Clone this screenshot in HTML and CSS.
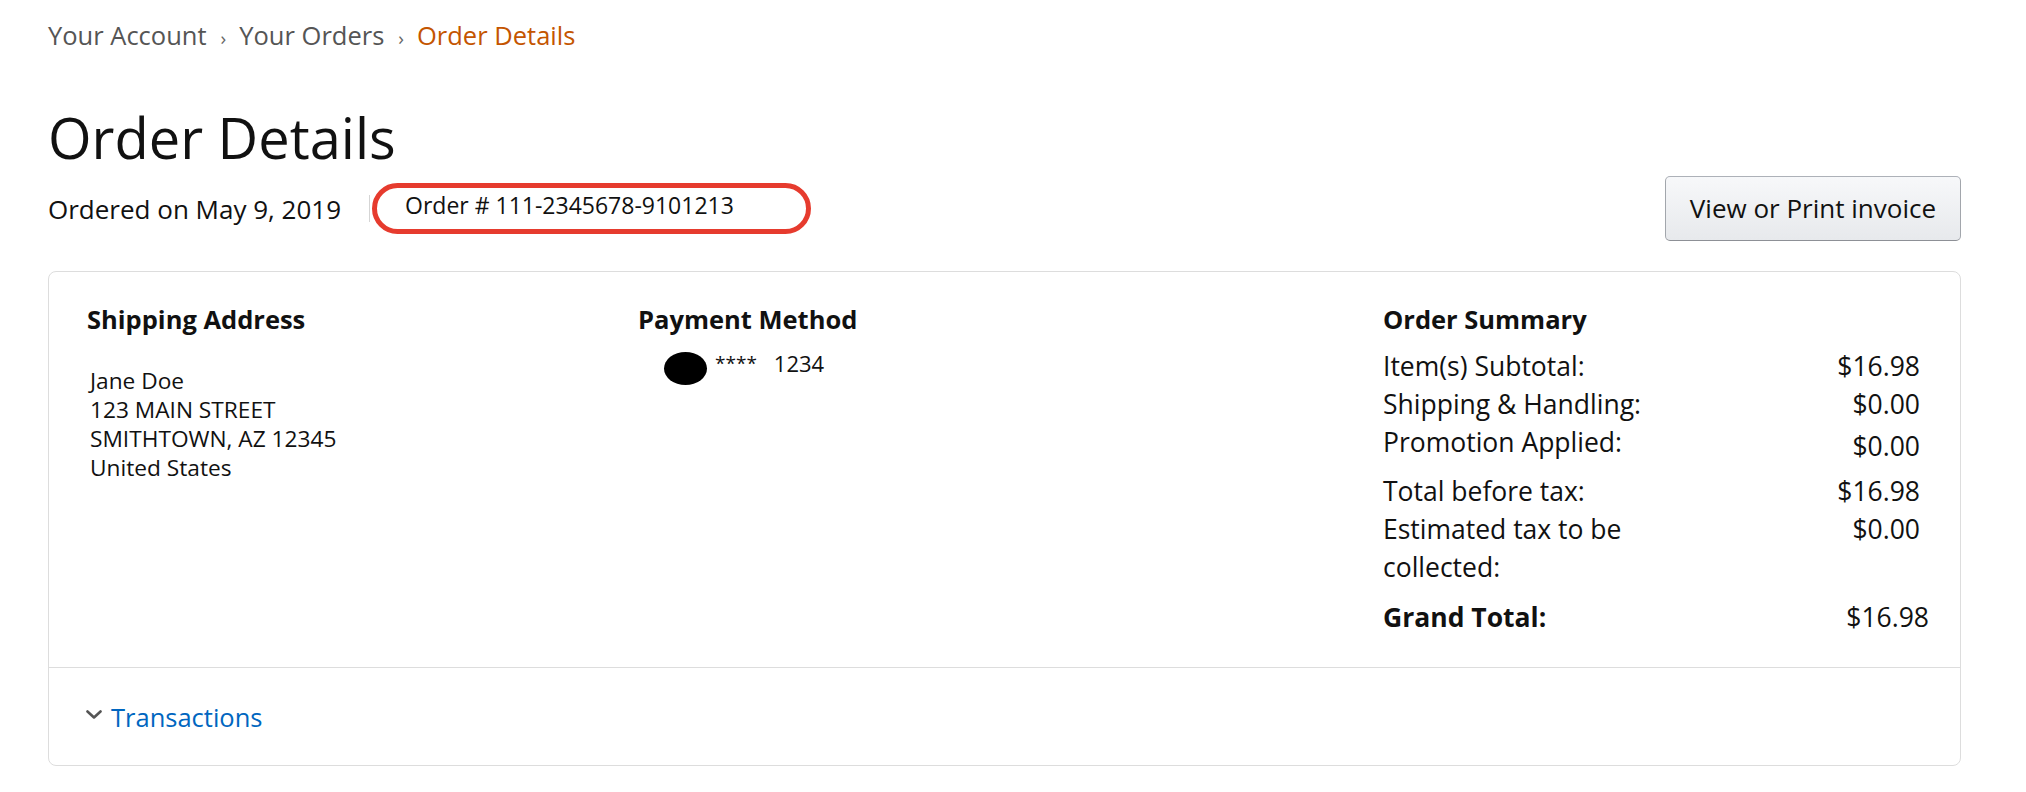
FILE: index.html
```html
<!DOCTYPE html>
<html lang="en">
<head>
<meta charset="utf-8">
<title>Order Details</title>
<link rel="stylesheet" href="styles.css">
</head>
<body>
<div class="page">
  <nav class="crumbs">
    <span class="crumb">Your Account</span>
    <span class="sep">›</span>
    <span class="crumb">Your Orders</span>
    <span class="sep">›</span>
    <span class="crumb current">Order Details</span>
  </nav>

  <h1 class="title">Order Details</h1>

  <div class="meta-row">
    <span class="date">Ordered on May 9, 2019</span>
    <span class="vdivider"></span>
    <span class="order-no">Order # 111-2345678-9101213</span>
    <button class="btn">View or Print invoice</button>
  </div>

  <section class="card">
    <div class="card-top">
      <div class="col">
        <h2 class="col-head">Shipping Address</h2>
        <div class="address">
          <div>Jane Doe</div>
          <div>123 MAIN STREET</div>
          <div>SMITHTOWN, AZ 12345</div>
          <div>United States</div>
        </div>
      </div>
      <div class="col">
        <h2 class="col-head">Payment Method</h2>
        <div class="pay-line">
          <span class="card-logo"></span>
          <span class="stars">****</span>
          <span class="last4">1234</span>
        </div>
      </div>
      <div class="col">
        <h2 class="col-head">Order Summary</h2>
        <div class="sum-row"><span class="lbl">Item(s) Subtotal:</span><span class="val">$16.98</span></div>
        <div class="sum-row"><span class="lbl">Shipping &amp; Handling:</span><span class="val">$0.00</span></div>
        <div class="sum-row promo"><span class="lbl">Promotion Applied:</span><span class="val">$0.00</span></div>
        <div class="sum-row"><span class="lbl">Total before tax:</span><span class="val">$16.98</span></div>
        <div class="sum-row"><span class="lbl">Estimated tax to be collected:</span><span class="val">$0.00</span></div>
        <div class="sum-row grand"><span class="lbl">Grand Total:</span><span class="val">$16.98</span></div>
      </div>
    </div>
    <div class="card-bottom">
      <span class="expander">
        <svg class="chev" width="16" height="9" viewBox="0 0 16 9" aria-hidden="true"><polyline points="1.5,1.5 8,7.5 14.5,1.5" fill="none" stroke="#555" stroke-width="2.6" stroke-linecap="round" stroke-linejoin="round"/></svg>
        <span class="link">Transactions</span>
      </span>
    </div>
  </section>
</div>
</body>
</html>
```

FILE: styles.css
```css
html, body {
  margin: 0;
  padding: 0;
  background: #fff;
}

body {
  font-family: "Open Sans", "Noto Sans", Arial, sans-serif;
  color: #111;
}

.page {
  padding: 19px 65px 0 48px;
}

.crumbs {
  display: flex;
  align-items: baseline;
  font-size: 25.5px;
  line-height: 32px;
  color: #555;
}

.sep {
  font-size: 19px;
  margin: 0 13px 0 14px;
  color: #666;
}

.crumb.current {
  color: #c45500;
}

.title {
  margin: 51px 0 0 0;
  font-size: 56px;
  line-height: 64px;
  font-weight: 400;
  color: #111;
}

.meta-row {
  display: flex;
  align-items: center;
  margin-top: 7px;
  height: 65px;
}

.date {
  font-size: 26px;
  line-height: 32px;
}

.vdivider {
  width: 1px;
  height: 27px;
  background: #d5d5d5;
  margin: 0 2px 0 28px;
}

.order-no {
  border: 5px solid #e63b2e;
  border-radius: 26px;
  font-size: 23px;
  line-height: 35px;
  padding: 0 72px 6px 28px;
}

.btn {
  margin-left: auto;
  height: 65px;
  box-sizing: border-box;
  padding: 0 24px;
  font-family: inherit;
  font-size: 26px;
  line-height: 63px;
  color: #111;
  background: linear-gradient(#f7f8fa, #e7e9ec);
  border: 1px solid #adb1b8;
  border-color: #adb1b8 #a2a6ac #8d9096;
  border-radius: 5px;
}

.card {
  margin-top: 30px;
  border: 1px solid #ddd;
  border-radius: 8px;
}

.card-top {
  display: grid;
  grid-template-columns: 551px 745px 1fr;
  padding: 31px 40px 31px 38px;
  border-bottom: 1px solid #ddd;
}

.col-head {
  margin: 0;
  font-size: 25.5px;
  line-height: 32px;
  font-weight: 700;
}

.address {
  margin-top: 31px;
  padding-left: 3px;
  font-size: 22.7px;
  line-height: 29px;
}

.pay-line {
  display: flex;
  align-items: flex-start;
  margin-top: 17px;
  padding-left: 26px;
  line-height: 22px;
}

.card-logo {
  width: 43px;
  height: 33px;
  border-radius: 50%;
  background: #000;
  margin-right: 8px;
}

.stars {
  font-size: 19px;
}

.last4 {
  font-size: 22px;
  margin-left: 17px;
}

.sum-row {
  display: flex;
  align-items: flex-start;
  justify-content: space-between;
  font-size: 26.5px;
  line-height: 38px;
}

.col-head + .sum-row {
  margin-top: 12px;
}

.sum-row .lbl {
  width: 320px;
}

.sum-row .val {
  text-align: right;
}

.sum-row.promo {
  margin-bottom: 7px;
}

.sum-row.promo .val {
  padding-top: 4px;
}

.sum-row.grand {
  margin-top: 12px;
}

.sum-row.grand .lbl {
  font-weight: 700;
}

.sum-row.grand .val {
  margin-right: -9px;
}

.card-bottom {
  padding: 33px 38px 32px 37px;
}

.expander {
  display: inline-flex;
  align-items: center;
}

.chev {
  margin-right: 9px;
  margin-top: -5px;
}

.link {
  font-size: 25.5px;
  line-height: 32px;
  color: #0066c0;
}
```
